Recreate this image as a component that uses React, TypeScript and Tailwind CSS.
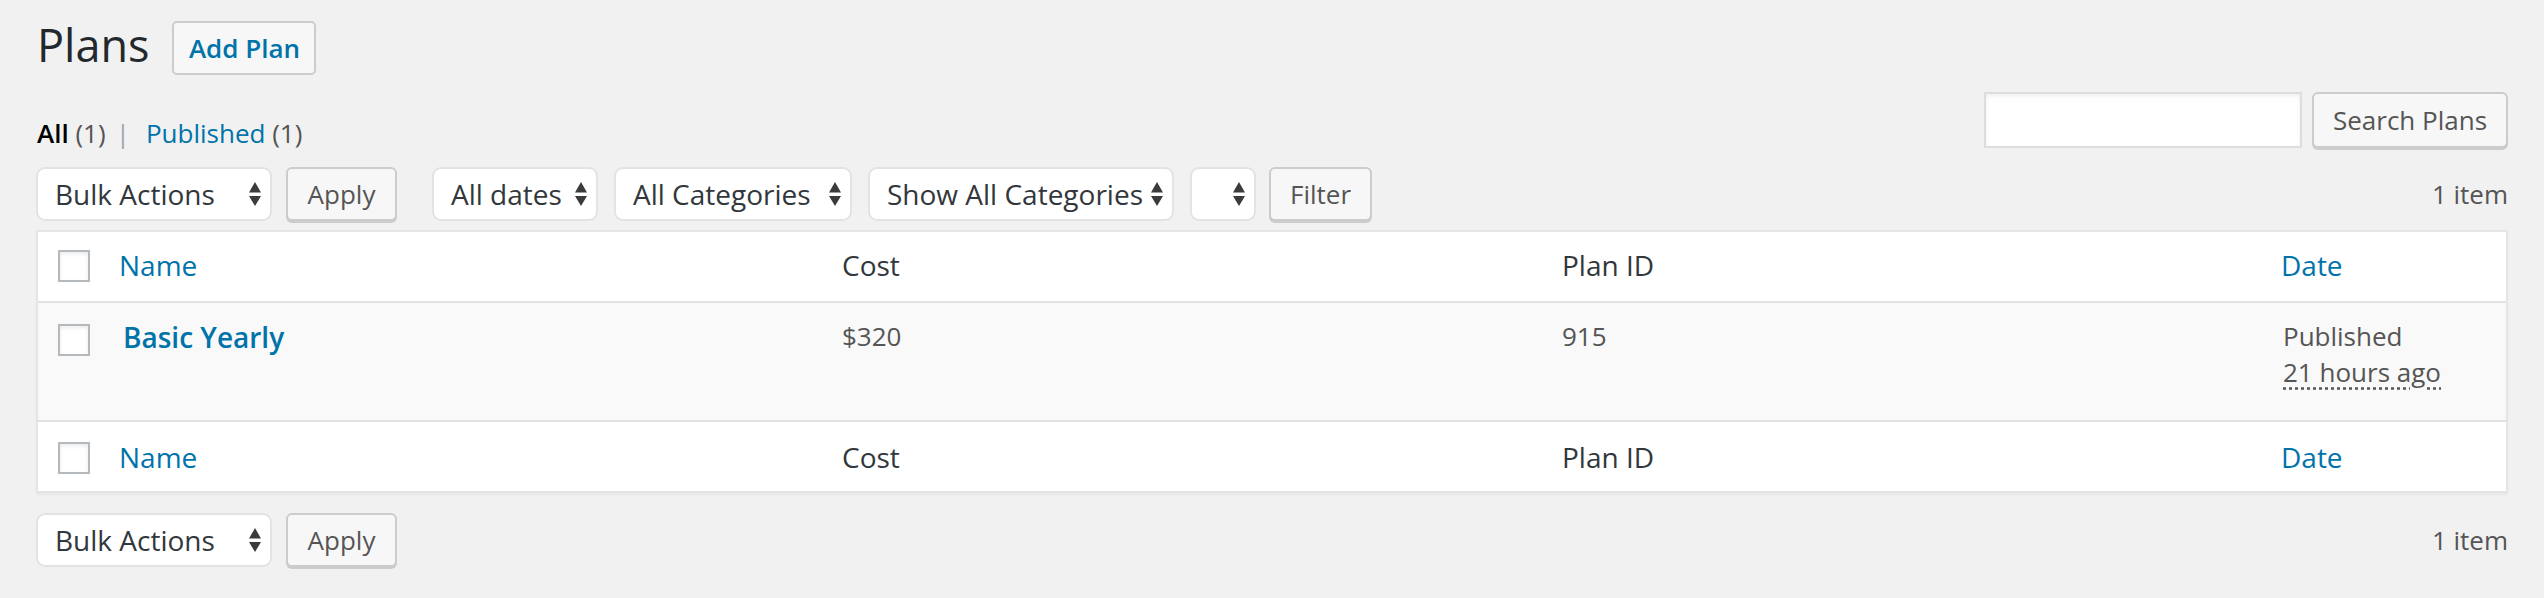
import React from 'react'

const FILTERS = [
  { label: 'All dates', width: 'w-[166px]' },
  { label: 'All Categories', width: 'w-[238px]' },
  { label: 'Show All Categories', width: 'w-[306px]' },
  { label: '', width: 'w-[66px]' },
]

function Arrows() {
  return (
    <svg width="12" height="24" viewBox="0 0 12 24" className="shrink-0">
      <path d="M6 0 L12 10.5 H0 Z" fill="#3b3b3b" />
      <path d="M0 14 H12 L6 24 Z" fill="#3b3b3b" />
    </svg>
  )
}

function Select({ label, width }: { label: string; width: string }) {
  return (
    <div
      className={`${width} h-[54px] flex items-center justify-between pl-[17px] pr-[9px] bg-white border-2 border-[#e3e3e3] rounded-[9px] text-[28px] leading-[40px] text-[#32373c] whitespace-nowrap`}
    >
      <span>{label}</span>
      <Arrows />
    </div>
  )
}

function Button({ label, width, tall }: { label: string; width: string; tall?: boolean }) {
  return (
    <div
      className={`${width} ${tall ? 'h-[56px]' : 'h-[54px]'} flex items-center justify-center bg-[#f7f7f7] border-2 border-[#cccccc] rounded-[6px] shadow-[0_2px_0_#cccccc] text-[26px] text-[#555555] whitespace-nowrap`}
    >
      {label}
    </div>
  )
}

function Checkbox() {
  return (
    <div className="w-[32px] h-[32px] bg-white border-2 border-[#b4b9be] shadow-[inset_0_2px_4px_rgba(0,0,0,0.08)]" />
  )
}

function HeadRow({ top }: { top?: boolean }) {
  const pad = top ? 'pt-[13px]' : 'pt-[15px]'
  return (
    <div
      className={`grid grid-cols-[61px_723px_720px_719px_1fr] h-[71px] ${top ? 'border-b-2' : 'border-t-2'} border-[#e1e1e1] bg-white text-[28px] leading-[40px]`}
    >
      <div className={`${top ? 'pt-[18px]' : 'pt-[20px]'} pl-[20px]`}>
        <Checkbox />
      </div>
      <div className={`${pad} pl-[20px] text-[#0073aa]`}>Name</div>
      <div className={`${pad} pl-[20px] text-[#32373c]`}>Cost</div>
      <div className={`${pad} pl-[20px] text-[#32373c]`}>Plan ID</div>
      <div className={`${pad} pl-[20px] text-[#0073aa]`}>Date</div>
    </div>
  )
}

export default function App() {
  return (
    <div className="min-h-[598px] bg-[#f1f1f1] px-[36px] pt-[15px] font-['Open_Sans',sans-serif]">
      {/* Title */}
      <div className="flex items-start h-[60px]">
        <h1 className="text-[45px] leading-[60px] font-normal text-[#23282d] pl-[1px]">Plans</h1>
        <div className="ml-[23px] mt-[6px] w-[144px] h-[54px] flex items-center justify-center bg-[#f7f7f7] border-2 border-[#cccccc] rounded-[5px] text-[26px] font-semibold text-[#0073aa]">
          Add Plan
        </div>
      </div>

      {/* Views + search */}
      <div className="mt-[17px] flex justify-between items-start">
        <div className="pt-[23px] pl-[1px] text-[26px] leading-[36px] text-[#555555] whitespace-nowrap">
          <span className="font-semibold text-black">All</span> (1)
          <span className="ml-[10px] mr-[16px] text-[#a0a5aa]">|</span>
          <span className="text-[#0073aa]">Published</span> (1)
        </div>
        <div className="flex items-start">
          <div className="w-[318px] h-[56px] bg-white border-2 border-[#dddddd] shadow-[inset_0_2px_4px_rgba(0,0,0,0.07)]" />
          <div className="ml-[10px]">
            <Button label="Search Plans" width="w-[196px]" tall />
          </div>
        </div>
      </div>

      {/* Top tablenav */}
      <div className="mt-[16px] flex items-start h-[56px]">
        <Select label="Bulk Actions" width="w-[236px]" />
        <div className="ml-[14px]">
          <Button label="Apply" width="w-[111px]" />
        </div>
        <div className="ml-[35px] flex gap-[16px]">
          {FILTERS.map((f, i) => (
            <Select key={i} label={f.label} width={f.width} />
          ))}
        </div>
        <div className="ml-[13px]">
          <Button label="Filter" width="w-[103px]" />
        </div>
        <div className="ml-auto self-center text-[26px] leading-[36px] text-[#555555] pb-[2px]">1 item</div>
      </div>

      {/* Table */}
      <div className="mt-[7px] bg-white border-2 border-[#e5e5e5] shadow-[0_2px_2px_rgba(0,0,0,0.04)]">
        <HeadRow top />
        <div className="grid grid-cols-[61px_723px_720px_719px_1fr] h-[117px] bg-[#f9f9f9] text-[26px] leading-[36px] text-[#555555]">
          <div className="pt-[21px] pl-[20px]">
            <Checkbox />
          </div>
          <div className="pt-[14px] pl-[24px] text-[28px] leading-[40px] font-semibold text-[#0073aa]">Basic Yearly</div>
          <div className="pt-[15px] pl-[20px]">$320</div>
          <div className="pt-[15px] pl-[20px]">915</div>
          <div className="pt-[15px] pl-[22px]">
            <div>Published</div>
            <div>
              <span className="underline decoration-dotted decoration-[#555555] underline-offset-[5px]">21 hours ago</span>
            </div>
          </div>
        </div>
        <HeadRow />
      </div>

      {/* Bottom tablenav */}
      <div className="mt-[20px] flex items-start h-[56px]">
        <Select label="Bulk Actions" width="w-[236px]" />
        <div className="ml-[14px]">
          <Button label="Apply" width="w-[111px]" />
        </div>
        <div className="ml-auto self-center text-[26px] leading-[36px] text-[#555555] pb-[2px]">1 item</div>
      </div>
    </div>
  )
}
